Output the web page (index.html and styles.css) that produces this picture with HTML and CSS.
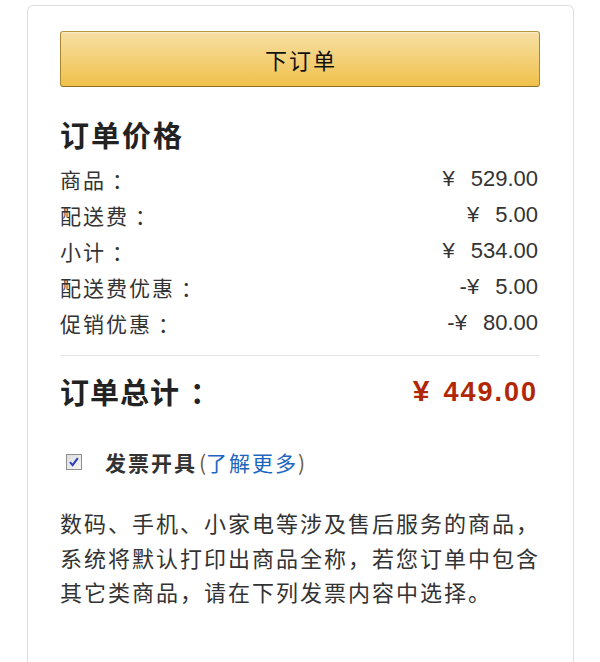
FILE: index.html
```html
<!DOCTYPE html>
<html lang="zh-CN">
<head>
<meta charset="utf-8">
<title>订单</title>
<link rel="stylesheet" href="styles.css">
</head>
<body>
<div class="card">
  <button class="order-btn" type="button">下订单</button>
  <h2 class="title">订单价格</h2>
  <div class="rows">
    <div class="row"><span class="label">商品<span class="colon">：</span></span><span class="amt"><span class="cur">¥</span>529.00</span></div>
    <div class="row"><span class="label">配送费<span class="colon">：</span></span><span class="amt"><span class="cur">¥</span>5.00</span></div>
    <div class="row"><span class="label">小计<span class="colon">：</span></span><span class="amt"><span class="cur">¥</span>534.00</span></div>
    <div class="row"><span class="label">配送费优惠<span class="colon">：</span></span><span class="amt">-<span class="cur">¥</span>5.00</span></div>
    <div class="row"><span class="label">促销优惠<span class="colon">：</span></span><span class="amt">-<span class="cur">¥</span>80.00</span></div>
  </div>
  <div class="total">
    <span class="total-label">订单总计<span class="colon-big">：</span></span>
    <span class="total-amt"><span class="cur-big">¥</span>449.00</span>
  </div>
  <div class="invoice">
    <span class="check"><svg width="16" height="16" viewBox="0 0 16 16"><defs><linearGradient id="cb" x1="0" y1="0" x2="1" y2="1"><stop offset="0" stop-color="#dcdcdc"/><stop offset="1" stop-color="#f6f6f6"/></linearGradient></defs><rect x="0.5" y="0.5" width="15" height="15" fill="url(#cb)" stroke="#8e8f8f"/><path d="M4 8.2 L6.6 11.2 L11.8 4.2" fill="none" stroke="#2a3fb8" stroke-width="2"/></svg></span>
    <span class="inv-label">发票开具</span>
    <span class="paren">(</span><a class="more" href="#">了解更多</a><span class="paren">)</span>
  </div>
  <p class="note">数码、手机、小家电等涉及售后服务的商品，系统将默认打印出商品全称，若您订单中包含其它类商品，请在下列发票内容中选择。</p>
</div>
</body>
</html>
```
FILE: styles.css
```css
html, body {
  margin: 0;
  padding: 0;
  background: #fff;
}
body {
  font-family: "Noto Sans CJK SC", "Liberation Sans", sans-serif;
  color: #333;
  overflow: hidden;
}
.card {
  margin: 5px 26px 0 27px;
  border: 1px solid #dedede;
  border-bottom: none;
  border-radius: 6px 6px 0 0;
  padding: 25px 33px 0 32px;
  min-height: 700px;
  box-sizing: border-box;
}
.order-btn {
  display: block;
  width: 100%;
  height: 56px;
  border: 1px solid #a88734;
  border-color: #b5963e #a88734 #8c6f26;
  border-radius: 3px;
  background: linear-gradient(to bottom, #f7dfa5, #f0c14b);
  box-shadow: inset 0 1px 0 rgba(255,255,255,0.4);
  font-family: "Noto Sans CJK SC", sans-serif;
  font-size: 22px;
  color: #111;
  letter-spacing: 2px;
  padding: 0 0 0 2px;
  cursor: pointer;
}
.title {
  margin: 29px 0 9px;
  font-size: 29px;
  line-height: 36px;
  font-weight: bold;
  color: #222;
  letter-spacing: 2px;
}
.rows {
  display: flex;
  flex-direction: column;
}
.row {
  display: flex;
  justify-content: space-between;
  align-items: center;
  height: 36px;
}
.label {
  font-size: 21px;
  letter-spacing: 2px;
  color: #333;
}
.colon {
  letter-spacing: 0;
  margin-left: 6px;
}
.colon-big {
  margin-left: 10px;
}
.amt {
  font-family: "Liberation Sans", sans-serif;
  font-size: 22px;
  color: #333;
  padding-right: 2px;
}
.cur {
  margin-right: 16px;
}
.total {
  margin-top: 14px;
  border-top: 1px solid #e7e7e7;
  padding-top: 15px;
  display: flex;
  justify-content: space-between;
  align-items: center;
  height: 40px;
  box-sizing: content-box;
}
.total-label {
  font-size: 29px;
  font-weight: bold;
  color: #222;
  letter-spacing: 1px;
}
.total-amt {
  font-family: "Liberation Sans", sans-serif;
  font-size: 27px;
  font-weight: bold;
  color: #b12704;
  letter-spacing: 2px;
  margin-right: 2px;
}
.cur-big {
  font-size: 30px;
  margin-right: 12px;
}
.invoice {
  margin-top: 33px;
  display: flex;
  align-items: center;
  height: 36px;
  padding-left: 6px;
}
.check {
  display: inline-flex;
  width: 16px;
  height: 16px;
  margin-right: 23px;
}
.inv-label {
  font-size: 21px;
  font-weight: bold;
  color: #333;
  letter-spacing: 2px;
  margin-right: 2px;
}
.paren {
  font-size: 21px;
  color: #6b5a3a;
}
.more {
  font-size: 21px;
  color: #1a66c0;
  text-decoration: none;
  letter-spacing: 2px;
}
.note {
  margin: 25px 0 0;
  font-size: 22px;
  line-height: 34.5px;
  letter-spacing: 2px;
  color: #333;
  text-align: justify;
}
```
